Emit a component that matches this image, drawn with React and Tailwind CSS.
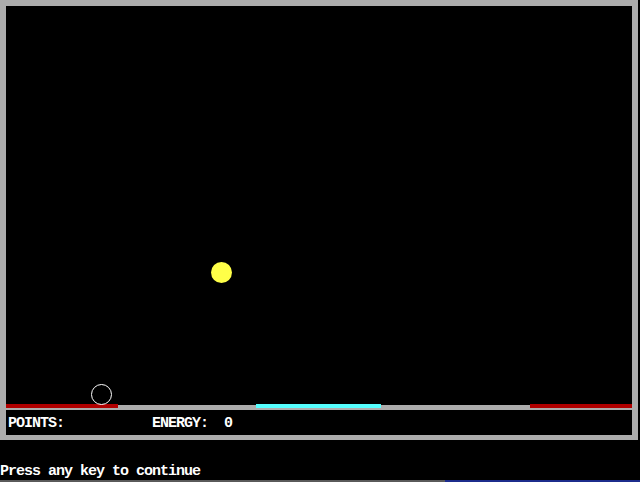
// App.jsx - DOS-style game screen
const mono = { fontFamily: '"Liberation Mono", "DejaVu Sans Mono", monospace' };

function Paddle({ color, width }) {
  return (
    <div className="flex flex-col" style={{ width }}>
      <div className={`h-[4px] ${color}`} />
      <div className="h-[2px] bg-[#acacac]" />
    </div>
  );
}

function Rail({ width }) {
  return (
    <div className="flex flex-col" style={{ width }}>
      <div className="h-[1px]" />
      <div className="h-[5px] bg-[#acacac]" />
    </div>
  );
}

export default function App() {
  return (
    <div className="w-[640px] h-[482px] bg-black flex flex-col overflow-hidden" style={mono}>
      <div className="w-[638px] h-[440px] border-[#acacac] border-t-[6px] border-l-[6px] border-r-[6px] border-b-[5px] flex flex-col">
        {/* play field */}
        <div className="relative h-[398px]">
          <div className="absolute left-[205px] top-[256px] w-[21px] h-[21px] rounded-full bg-[#ffff48]" />
          <div className="absolute left-[85px] top-[378px] w-[21px] h-[21px] rounded-full border border-white" />
        </div>
        {/* rail with paddles */}
        <div className="flex h-[6px]">
          <Paddle color="bg-[#b00000]" width="112px" />
          <Rail width="138px" />
          <Paddle color="bg-[#55ffff]" width="125px" />
          <Rail width="149px" />
          <Paddle color="bg-[#b00000]" width="102px" />
        </div>
        {/* status line */}
        <div className="flex-1 pl-[2px] pt-[2px] text-white font-bold text-[15px] tracking-[-1px] leading-[23px] whitespace-pre">
          {'POINTS:           ENERGY:  0'}
        </div>
      </div>
      <div className="flex-1 flex flex-col justify-end">
        <div className="text-white font-bold text-[15px] tracking-[-1px] leading-[17px] whitespace-pre">
          Press any key to continue
        </div>
        <div className="flex h-[2px]">
          <div className="w-[445px] bg-[#5a5a5a]" />
          <div className="flex-1 bg-[#1c2c8c]" />
        </div>
      </div>
    </div>
  );
}
